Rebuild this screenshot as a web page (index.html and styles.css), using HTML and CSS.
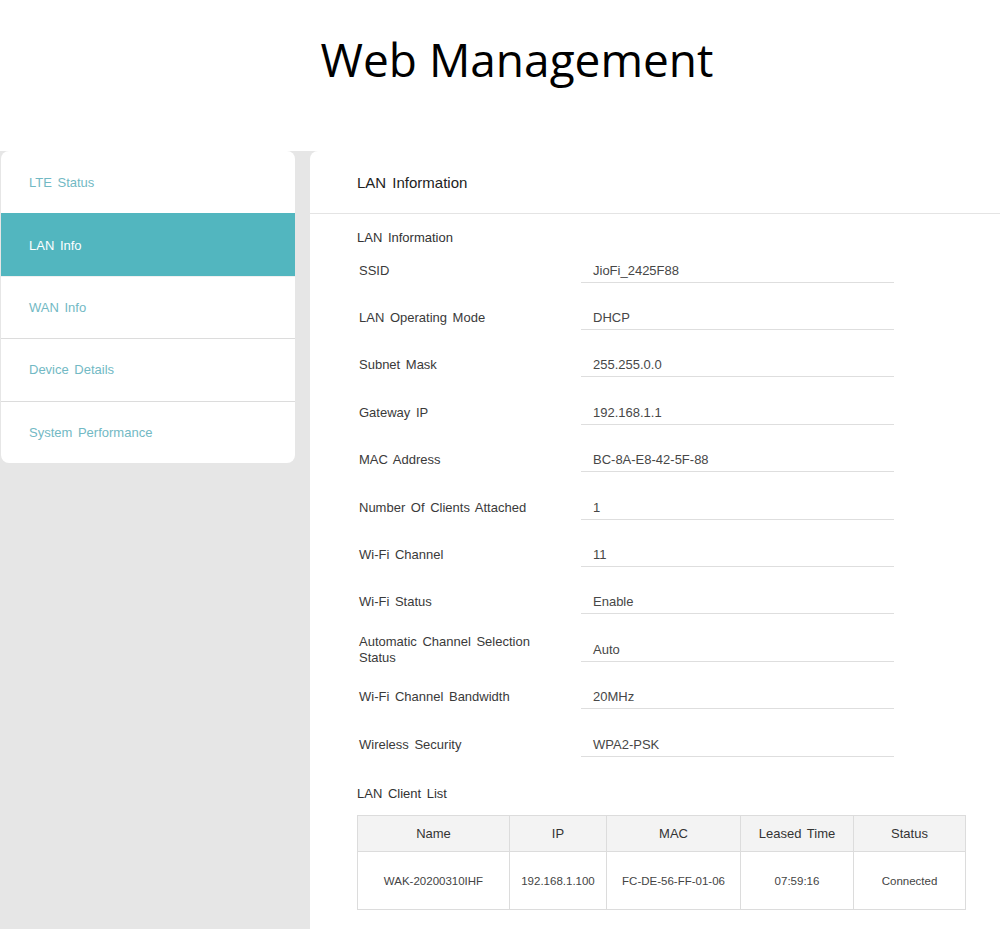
FILE: index.html
```html
<!DOCTYPE html>
<html>
<head>
<meta charset="utf-8">
<title>Web Management</title>
<link rel="stylesheet" href="styles.css">
</head>
<body>
<header class="top">
  <h1 class="title">Web Management</h1>
</header>
<div class="page">
  <nav class="sidebar">
    <a class="nav-item">LTE Status</a>
    <a class="nav-item active">LAN Info</a>
    <a class="nav-item">WAN Info</a>
    <a class="nav-item">Device Details</a>
    <a class="nav-item">System Performance</a>
  </nav>
  <main class="panel">
    <div class="panel-head">LAN Information</div>
    <div class="panel-body">
      <div class="section-title">LAN Information</div>
      <div class="rows">
        <div class="row"><div class="label">SSID</div><div class="value">JioFi_2425F88</div></div>
        <div class="row"><div class="label">LAN Operating Mode</div><div class="value">DHCP</div></div>
        <div class="row"><div class="label">Subnet Mask</div><div class="value">255.255.0.0</div></div>
        <div class="row"><div class="label">Gateway IP</div><div class="value">192.168.1.1</div></div>
        <div class="row"><div class="label">MAC Address</div><div class="value">BC-8A-E8-42-5F-88</div></div>
        <div class="row"><div class="label">Number Of Clients Attached</div><div class="value">1</div></div>
        <div class="row"><div class="label">Wi-Fi Channel</div><div class="value">11</div></div>
        <div class="row"><div class="label">Wi-Fi Status</div><div class="value">Enable</div></div>
        <div class="row"><div class="label">Automatic Channel Selection Status</div><div class="value">Auto</div></div>
        <div class="row"><div class="label">Wi-Fi Channel Bandwidth</div><div class="value">20MHz</div></div>
        <div class="row"><div class="label">Wireless Security</div><div class="value">WPA2-PSK</div></div>
      </div>
      <div class="section-title client-title">LAN Client List</div>
      <table class="clients">
        <thead>
          <tr><th class="c-name">Name</th><th class="c-ip">IP</th><th class="c-mac">MAC</th><th class="c-time">Leased Time</th><th class="c-status">Status</th></tr>
        </thead>
        <tbody>
          <tr><td>WAK-20200310IHF</td><td>192.168.1.100</td><td>FC-DE-56-FF-01-06</td><td>07:59:16</td><td>Connected</td></tr>
        </tbody>
      </table>
    </div>
  </main>
</div>
</body>
</html>
```
FILE: styles.css
```css
* { box-sizing: border-box; }
html, body { margin: 0; padding: 0; }
body {
  font-family: "Liberation Sans", Arial, sans-serif;
  background: #ffffff;
  color: #333;
  width: 1000px;
  height: 929px;
  overflow: hidden;
}
.top {
  height: 151px;
  background: #fff;
}
.title {
  margin: 0;
  padding-top: 28px;
  text-align: center;
  font-family: "Open Sans", "Noto Sans", sans-serif;
  font-weight: 400;
  font-size: 46px;
  line-height: 62px;
  color: #000;
  padding-left: 34px;
}
.page {
  display: flex;
  align-items: flex-start;
  gap: 15px;
  background: #e6e6e6;
  padding-left: 1px;
  height: 778px;
}
.sidebar {
  flex: 0 0 294px;
  width: 294px;
  background: #fff;
  border-radius: 8px;
  overflow: hidden;
  display: flex;
  flex-direction: column;
}
.nav-item {
  display: flex;
  align-items: center;
  height: 62.4px;
  padding-left: 28px;
  font-size: 13px;
  word-spacing: 2px;
  color: #72b9c4;
  border-top: 1px solid #dcdcdc;
}
.nav-item:first-child { border-top: none; }
.nav-item.active {
  background: #52b6bf;
  color: #fff;
  border-top-color: #52b6bf;
}
.nav-item.active + .nav-item { border-top-color: #f0f0f0; }
.panel {
  flex: 1 1 auto;
  min-width: 0;
  height: 778px;
  background: #fff;
  border-top-left-radius: 8px;
}
.panel-head {
  height: 63px;
  display: flex;
  align-items: center;
  padding-left: 47px;
  font-size: 15px;
  word-spacing: 2px;
  color: #222;
  border-bottom: 1px solid #e4e4e4;
}
.panel-body {
  padding: 0 0 0 47px;
}
.section-title {
  margin-top: 15px;
  font-size: 13px;
  line-height: 18px;
  word-spacing: 2px;
  color: #333;
}
.rows {
  display: flex;
  flex-direction: column;
}
.row {
  display: flex;
  align-items: center;
  height: 47.4px;
}
.label {
  width: 224px;
  padding-left: 2px;
  padding-right: 30px;
  font-size: 13px;
  line-height: 16px;
  word-spacing: 2px;
  color: #3a3a3a;
}
.value {
  width: 313px;
  padding-left: 12px;
  font-size: 13px;
  line-height: 22px;
  color: #474747;
  border-bottom: 1px solid #dedede;
  margin-top: 1px;
}
.client-title {
  margin-top: 17px;
}
.clients {
  margin-top: 12px;
  width: 608px;
  border-collapse: collapse;
  table-layout: fixed;
}
.clients th, .clients td {
  border: 1px solid #dcdcdc;
  text-align: center;
  color: #333;
  padding: 0;
  word-spacing: 2px;
}
.clients th {
  background: #f3f3f3;
  font-weight: 400;
  font-size: 13px;
  height: 36px;
}
.clients td {
  font-size: 11.5px;
  height: 58px;
  color: #444;
}
.c-name { width: 152px; }
.c-ip { width: 97px; }
.c-mac { width: 134px; }
.c-time { width: 113px; }
.c-status { width: 112px; }
```
